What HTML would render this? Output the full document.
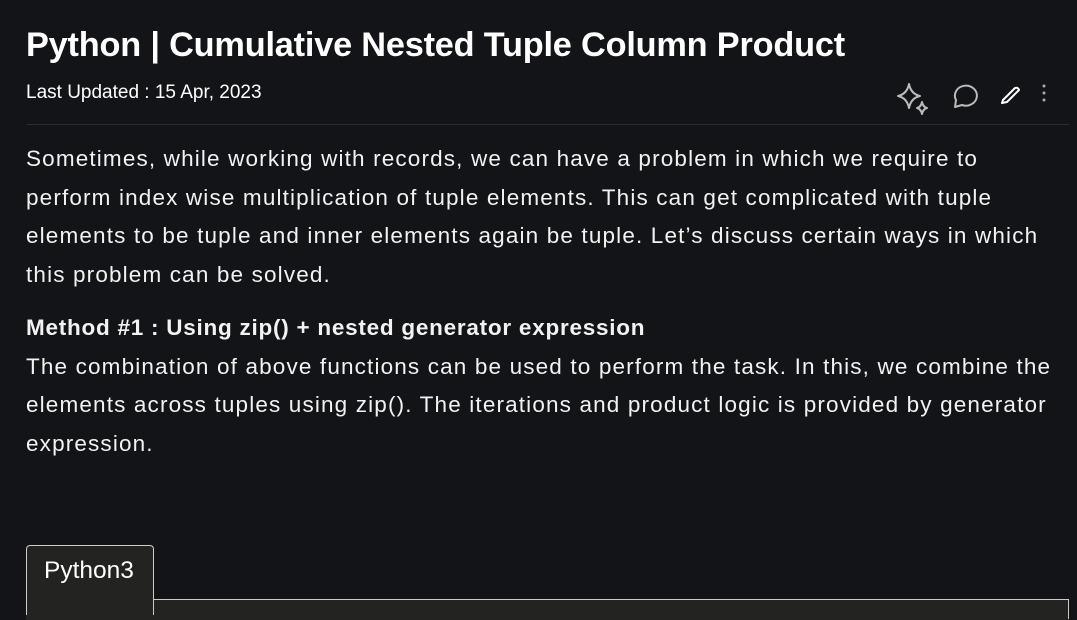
<!DOCTYPE html>
<html><head><style>
body{margin:0;width:1077px;height:610px;background:#131417;color:#fff;font-family:"Liberation Sans",sans-serif;overflow:hidden;position:relative}
.t{position:absolute;left:26px;top:26px;font-size:34.3px;font-weight:bold;white-space:nowrap;letter-spacing:-0.2px}
.d{position:absolute;left:26px;top:82px;font-size:19px;white-space:nowrap}
.hr{position:absolute;left:26px;top:124px;width:1043px;height:1px;background:#2b2c30}
.p{position:absolute;left:26px;font-size:22.5px;letter-spacing:1.15px;line-height:38.5px;white-space:nowrap;color:#f2f2f2}
.p b{letter-spacing:0.75px}
.tab{position:absolute;left:26px;top:545px;width:128px;height:70px;background:#232321;border:1px solid #ccc;border-bottom:none;border-radius:4px 4px 0 0;box-sizing:border-box}
.tab span{position:absolute;left:17px;top:11px;font-size:24.5px}
.line{position:absolute;left:153px;top:599px;width:916px;height:1px;background:#ccc}
.rb{position:absolute;left:1068px;top:599px;width:1px;height:20px;background:#ccc}
.box{position:absolute;left:26px;top:600px;width:1043px;height:20px;background:#232321}
</style></head><body>
<div class="t">Python | Cumulative Nested Tuple Column Product</div>
<div class="d">Last Updated : 15 Apr, 2023</div>
<svg style="position:absolute;left:890px;top:78px" width="170" height="42" viewBox="0 0 170 42" fill="none" stroke="#bbb" stroke-width="2" stroke-linejoin="round">
<path d="M19 6 Q21 16 30 18 Q21 20 19 30 Q17 20 8 18 Q17 16 19 6Z"/>
<path d="M32 24 Q33 29 37 30 Q33 31 32 36 Q31 31 27 30 Q31 29 32 24Z"/>
<path d="M65 29 L66 22 A11 10 0 1 1 72 27 Z"/>
<path d="M113 22 L125 10 Q128 9 129 12 L117 24 L112 25 Z" stroke="#fff"/>
<circle cx="154" cy="8" r="1.5" fill="#aaa" stroke="none"/><circle cx="154" cy="15" r="1.5" fill="#aaa" stroke="none"/><circle cx="154" cy="22" r="1.5" fill="#aaa" stroke="none"/>
</svg>
<div class="hr"></div>
<div class="p" style="top:140px">
<div>Sometimes, while working with records, we can have a problem in which we require to</div>
<div>perform index wise multiplication of tuple elements. This can get complicated with tuple</div>
<div>elements to be tuple and inner elements again be tuple. Let’s discuss certain ways in which</div>
<div>this problem can be solved.</div>
</div>
<div class="p" style="top:309px">
<div><b>Method #1 : Using zip() + nested generator expression</b></div>
<div>The combination of above functions can be used to perform the task. In this, we combine the</div>
<div>elements across tuples using zip(). The iterations and product logic is provided by generator</div>
<div>expression.</div>
</div>
<div class="box"></div>
<div class="tab"><span>Python3</span></div>
<div class="line"></div><div class="rb"></div>
</body></html>
